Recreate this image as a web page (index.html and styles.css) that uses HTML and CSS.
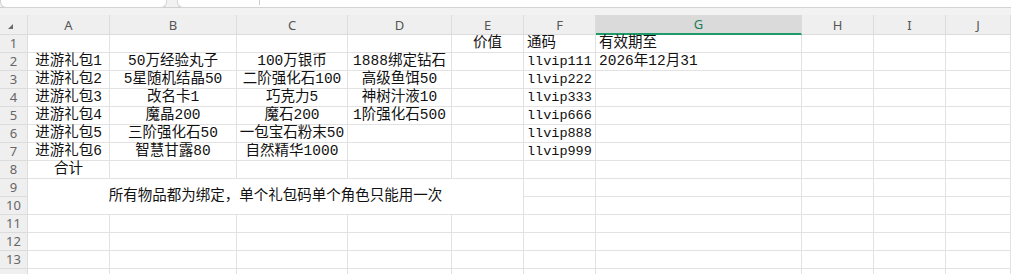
FILE: index.html
```html
<!DOCTYPE html>
<html>
<head>
<meta charset="utf-8">
<link rel="stylesheet" href="styles.css">
</head>
<body>
<div class="topbar">
  <div class="namebox"></div>
  <div class="formulabox"><span class="sep"></span></div>
</div>
<div class="sheet">
  <div class="hd corner"><span class="tri"></span></div>
  <div class="hd">A</div><div class="hd">B</div><div class="hd">C</div><div class="hd">D</div><div class="hd">E</div><div class="hd">F</div><div class="hd sel">G</div><div class="hd">H</div><div class="hd">I</div><div class="hd">J</div>

  <div class="rh">1</div>
  <div class="c"></div><div class="c"></div><div class="c"></div><div class="c"></div><div class="c ctr">价值</div><div class="c lft">通码</div><div class="c lft">有效期至</div><div class="c"></div><div class="c"></div><div class="c"></div>

  <div class="rh">2</div>
  <div class="c ctr">进游礼包1</div><div class="c ctr">50万经验丸子</div><div class="c ctr">100万银币</div><div class="c ctr">1888绑定钻石</div><div class="c"></div><div class="c lft code">llvip111</div><div class="c lft">2026年12月31</div><div class="c"></div><div class="c"></div><div class="c"></div>

  <div class="rh">3</div>
  <div class="c ctr">进游礼包2</div><div class="c ctr">5星随机结晶50</div><div class="c ctr">二阶强化石100</div><div class="c ctr">高级鱼饵50</div><div class="c"></div><div class="c lft code">llvip222</div><div class="c"></div><div class="c"></div><div class="c"></div><div class="c"></div>

  <div class="rh">4</div>
  <div class="c ctr">进游礼包3</div><div class="c ctr">改名卡1</div><div class="c ctr">巧克力5</div><div class="c ctr">神树汁液10</div><div class="c"></div><div class="c lft code">llvip333</div><div class="c"></div><div class="c"></div><div class="c"></div><div class="c"></div>

  <div class="rh">5</div>
  <div class="c ctr">进游礼包4</div><div class="c ctr">魔晶200</div><div class="c ctr">魔石200</div><div class="c ctr">1阶强化石500</div><div class="c"></div><div class="c lft code">llvip666</div><div class="c"></div><div class="c"></div><div class="c"></div><div class="c"></div>

  <div class="rh">6</div>
  <div class="c ctr">进游礼包5</div><div class="c ctr">三阶强化石50</div><div class="c ctr ovf">一包宝石粉末50</div><div class="c"></div><div class="c"></div><div class="c lft code">llvip888</div><div class="c"></div><div class="c"></div><div class="c"></div><div class="c"></div>

  <div class="rh">7</div>
  <div class="c ctr">进游礼包6</div><div class="c ctr">智慧甘露80</div><div class="c ctr">自然精华1000</div><div class="c"></div><div class="c"></div><div class="c lft code">llvip999</div><div class="c"></div><div class="c"></div><div class="c"></div><div class="c"></div>

  <div class="rh">8</div>
  <div class="c ctr">合计</div><div class="c"></div><div class="c"></div><div class="c"></div><div class="c"></div><div class="c"></div><div class="c"></div><div class="c"></div><div class="c"></div><div class="c"></div>

  <div class="rh">9</div>
  <div class="c ctr merged">所有物品都为绑定，单个礼包码单个角色只能用一次</div><div class="c"></div><div class="c"></div><div class="c"></div><div class="c"></div><div class="c"></div>

  <div class="rh">10</div>
  <div class="c"></div><div class="c"></div><div class="c"></div><div class="c"></div><div class="c"></div>

  <div class="rh">11</div>
  <div class="c"></div><div class="c"></div><div class="c"></div><div class="c"></div><div class="c"></div><div class="c"></div><div class="c"></div><div class="c"></div><div class="c"></div><div class="c"></div>

  <div class="rh">12</div>
  <div class="c"></div><div class="c"></div><div class="c"></div><div class="c"></div><div class="c"></div><div class="c"></div><div class="c"></div><div class="c"></div><div class="c"></div><div class="c"></div>

  <div class="rh">13</div>
  <div class="c"></div><div class="c"></div><div class="c"></div><div class="c"></div><div class="c"></div><div class="c"></div><div class="c"></div><div class="c"></div><div class="c"></div><div class="c"></div>

  <div class="rh"></div>
  <div class="c"></div><div class="c"></div><div class="c"></div><div class="c"></div><div class="c"></div><div class="c"></div><div class="c"></div><div class="c"></div><div class="c"></div><div class="c"></div>
</div>
</body>
</html>
```

FILE: styles.css
```css
html, body {
  margin: 0;
  padding: 0;
  background: #ffffff;
  overflow: hidden;
}

.topbar {
  display: flex;
  height: 15px;
  background: #f2f2f2;
  box-sizing: border-box;
  border-top: 7px solid transparent;
  position: relative;
}

.topbar::before {
  content: "";
  position: absolute;
  left: 0;
  right: 0;
  top: -7px;
  height: 7px;
  background: #f2f2f2;
  border-bottom: 1px solid #cfcfcf;
}

.namebox, .formulabox {
  position: relative;
  margin-top: -7px;
  height: 7px;
  background: #ffffff;
  border: 1px solid #d3d3d3;
  border-top: none;
  border-radius: 0 0 6px 6px;
  z-index: 1;
}

.namebox {
  width: 165px;
  margin-left: 0;
}

.formulabox {
  flex: 1;
  margin-left: 10px;
  border-right: none;
  border-radius: 0 0 0 6px;
}

.sep {
  display: block;
  position: absolute;
  left: 81px;
  top: 0;
  width: 1px;
  height: 5px;
  background: #cfcfcf;
}

.sheet {
  display: grid;
  grid-template-columns: 28px 82px 127px 111px 104px 72px 72px 206px 72px 72px 65px;
  grid-template-rows: 20px;
  grid-auto-rows: 18px;
  font-family: "Liberation Mono", "Noto Sans CJK SC", monospace;
  font-size: 14.5px;
  color: #111111;
}

.hd {
  background: #efefef;
  border-right: 1px solid #dcdcdc;
  border-bottom: 1px solid #dcdcdc;
  box-sizing: border-box;
  font-family: "Noto Sans", "Liberation Sans", sans-serif;
  font-size: 13px;
  color: #555555;
  display: flex;
  align-items: center;
  justify-content: center;
}

.hd.sel {
  background: #dadada;
  color: #1b7f57;
  border-bottom: 2px solid #1e9a68;
}

.corner {
  justify-content: flex-start;
  position: relative;
}

.tri {
  display: block;
  width: 0;
  height: 0;
  margin-left: 8px;
  margin-top: 3px;
  border-left: 5px solid transparent;
  border-bottom: 5px solid #6b6b6b;
}

.rh {
  background: #efefef;
  border-right: 1px solid #dcdcdc;
  border-bottom: 1px solid #dcdcdc;
  box-sizing: border-box;
  font-family: "Noto Sans", "Liberation Sans", sans-serif;
  font-size: 13px;
  color: #666666;
  display: flex;
  align-items: center;
  justify-content: center;
  line-height: 1;
}

.c {
  border-right: 1px solid #e2e2e2;
  border-bottom: 1px solid #e2e2e2;
  box-sizing: border-box;
  display: flex;
  align-items: center;
  white-space: nowrap;
  line-height: 17px;
  padding: 0 3px;
}

.ctr {
  justify-content: center;
}

.lft {
  justify-content: flex-start;
}

.code {
  font-size: 13.5px;
}

.ovf {
  overflow: visible;
  padding: 0;
  z-index: 1;
}

.merged {
  grid-column: span 5;
  grid-row: span 2;
}
```
